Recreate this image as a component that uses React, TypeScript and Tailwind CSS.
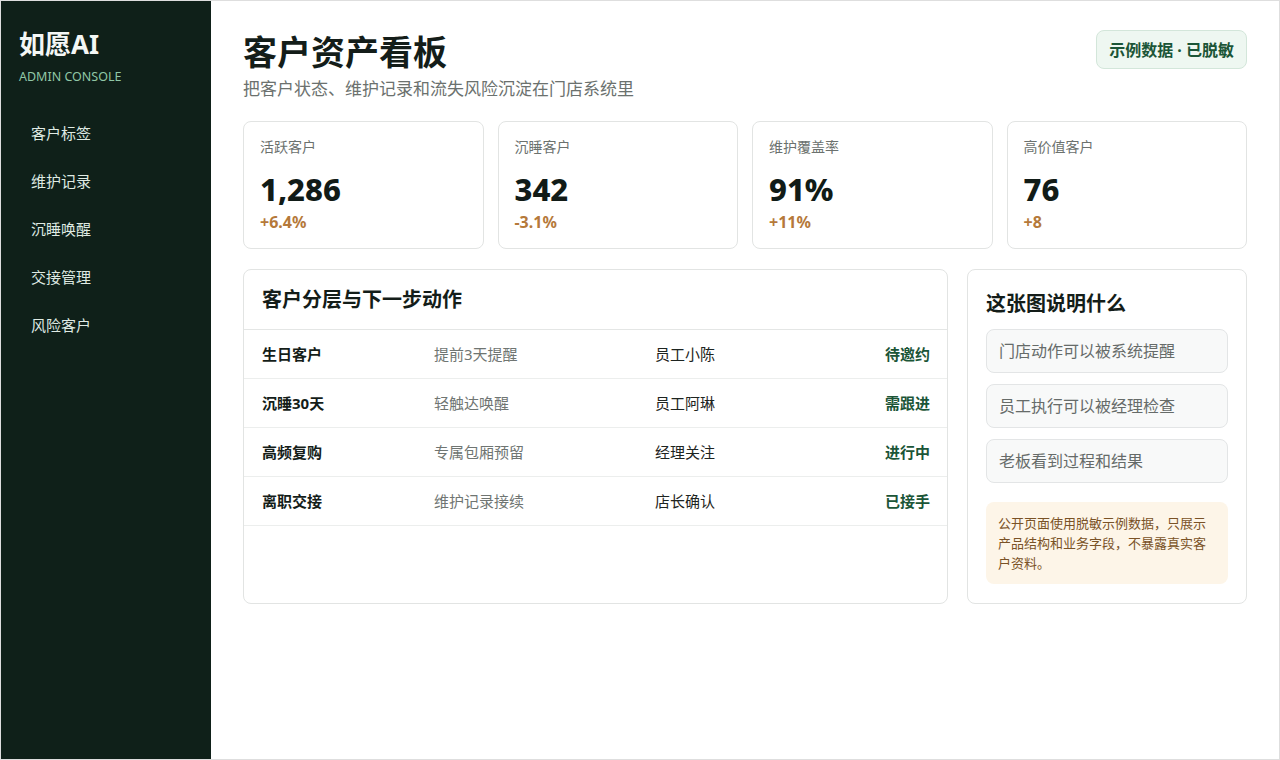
import React from 'react';

const font = { fontFamily: '"Noto Sans", "Noto Sans CJK SC", sans-serif' };

const navItems = ['客户标签', '维护记录', '沉睡唤醒', '交接管理', '风险客户'];

const stats = [
  { label: '活跃客户', value: '1,286', delta: '+6.4%' },
  { label: '沉睡客户', value: '342', delta: '-3.1%' },
  { label: '维护覆盖率', value: '91%', delta: '+11%' },
  { label: '高价值客户', value: '76', delta: '+8' },
];

const rows = [
  { seg: '生日客户', action: '提前3天提醒', owner: '员工小陈', status: '待邀约' },
  { seg: '沉睡30天', action: '轻触达唤醒', owner: '员工阿琳', status: '需跟进' },
  { seg: '高频复购', action: '专属包厢预留', owner: '经理关注', status: '进行中' },
  { seg: '离职交接', action: '维护记录接续', owner: '店长确认', status: '已接手' },
];

const points = ['门店动作可以被系统提醒', '员工执行可以被经理检查', '老板看到过程和结果'];

export default function App() {
  return (
    <div style={font} className="h-[760px] w-[1280px] flex border border-[#dedede] bg-white overflow-hidden">
      {/* Sidebar */}
      <aside className="w-[210px] shrink-0 bg-[#0f2019] pl-[18px] pr-4 pt-[27px]">
        <div className="text-[26px] leading-8 font-bold text-[#f4f7f5]">如愿AI</div>
        <div className="mt-[9px] text-[12.5px] leading-4 text-[#8fc7a6]">ADMIN CONSOLE</div>
        <nav className="mt-6 flex flex-col">
          {navItems.map((item) => (
            <div key={item} className="px-3 py-[14px] text-[15px] leading-5 text-[#dfeae3]">
              {item}
            </div>
          ))}
        </nav>
      </aside>

      {/* Main */}
      <main className="flex-1 px-8 pt-[28px]">
        <div className="flex items-start justify-between">
          <div className="pt-[3px]">
            <h1 className="text-[34px] leading-10 font-bold text-[#141d19]">客户资产看板</h1>
            <p className="mt-[5px] text-[17px] leading-6 text-[#6b716e]">把客户状态、维护记录和流失风险沉淀在门店系统里</p>
          </div>
          <div className="mt-px h-[39px] px-[12px] flex items-center rounded-lg border border-[#d3e6da] bg-[#eef7f1] text-[16px] font-bold text-[#1b5537]">
            示例数据 · 已脱敏
          </div>
        </div>

        <div className="mt-[20px] grid grid-cols-4 gap-[14px]">
          {stats.map((s) => (
            <div key={s.label} className="rounded-lg border border-[#e2e4e3] bg-white px-4 pt-[15px] pb-[16px]">
              <div className="text-[14px] leading-5 text-[#6b716e]">{s.label}</div>
              <div className="mt-[14px] text-[31px] leading-9 font-extrabold text-[#111b17]">{s.value}</div>
              <div className="mt-[5px] text-[16px] leading-5 font-bold text-[#b5793a]">{s.delta}</div>
            </div>
          ))}
        </div>

        <div className="mt-[20px] grid grid-cols-[1fr_280px] gap-[19px]">
          {/* Table card */}
          <div className="rounded-lg border border-[#e2e4e3] bg-white">
            <div className="px-[18px] py-[17px] border-b border-[#e4e6e5]">
              <h2 className="text-[20px] leading-[25px] font-bold text-[#141d19]">客户分层与下一步动作</h2>
            </div>
            {rows.map((r) => (
              <div
                key={r.seg}
                className="grid grid-cols-[172px_221px_1fr_auto] items-center h-[49px] pl-[18px] pr-[17px] border-b border-[#eceeed] text-[15px]"
              >
                <span className="font-bold text-[#141d19]">{r.seg}</span>
                <span className="text-[#6f7572]">{r.action}</span>
                <span className="text-[#1d2421]">{r.owner}</span>
                <span className="font-bold text-[#1b5537] text-right">{r.status}</span>
              </div>
            ))}
          </div>

          {/* Explanation card */}
          <div className="rounded-lg border border-[#e2e4e3] bg-white px-[18px] pt-[20px] pb-[19px]">
            <h2 className="text-[20px] leading-[27px] font-bold text-[#141d19]">这张图说明什么</h2>
            <div className="mt-3 flex flex-col gap-[11px]">
              {points.map((p) => (
                <div
                  key={p}
                  className="h-[44px] flex items-center px-[12px] rounded-lg border border-[#e3e5e6] bg-[#f8f9f9] text-[16px] text-[#666b69]"
                >
                  {p}
                </div>
              ))}
            </div>
            <div className="mt-[19px] rounded-lg bg-[#fdf5e8] px-3 py-[11px] text-[13px] leading-5 text-[#7a5226]">
              公开页面使用脱敏示例数据，只展示产品结构和业务字段，不暴露真实客户资料。
            </div>
          </div>
        </div>
      </main>
    </div>
  );
}
